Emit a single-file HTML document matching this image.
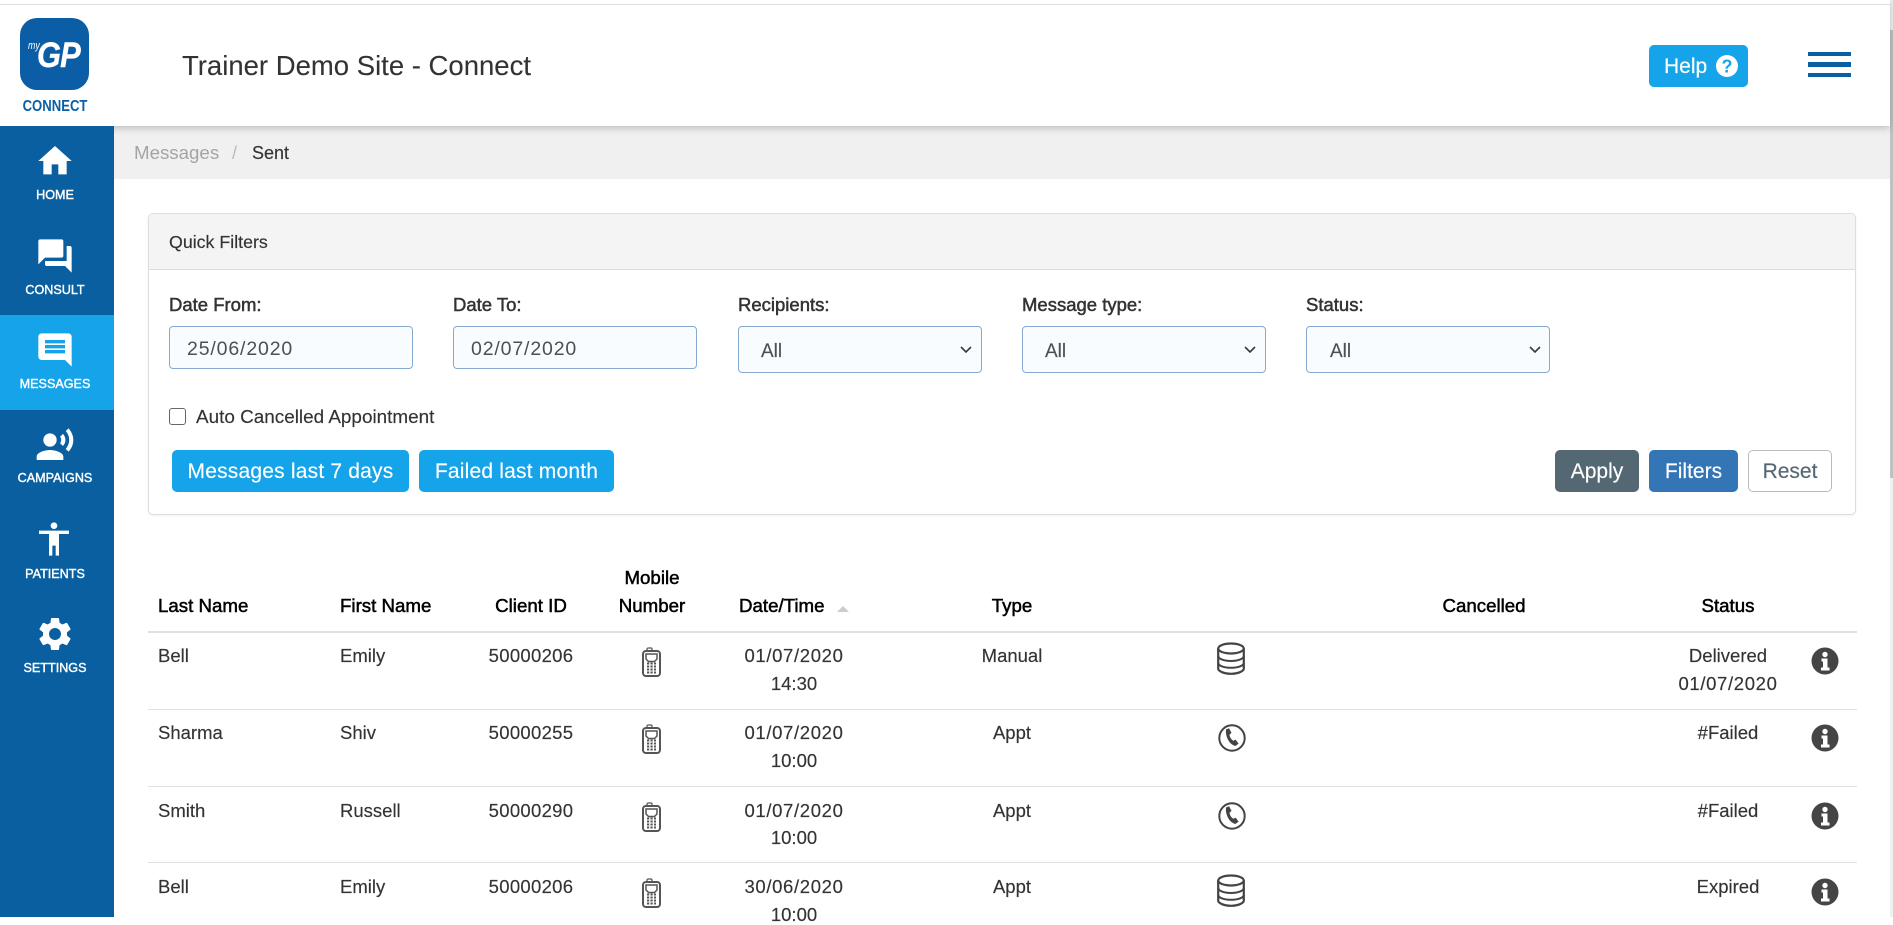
<!DOCTYPE html>
<html lang="en">
<head>
<meta charset="utf-8">
<title>Trainer Demo Site - Connect</title>
<style>
html,body{margin:0;padding:0;width:1893px;height:917px;overflow:hidden;background:#fff;font-family:"Liberation Sans",sans-serif;color:#333}
.a{position:absolute}
.t{position:absolute;white-space:nowrap;line-height:0;height:0;margin-top:1px}
.c{transform:translateX(-50%)}
.s{font-size:18.5px;color:#333;-webkit-text-stroke:.15px #333}
.n{letter-spacing:.3px}
.d{letter-spacing:.65px}
.h{font-size:18.7px;color:#000;-webkit-text-stroke:.5px #000}
.l{font-size:18.5px;color:#333;-webkit-text-stroke:.5px #333;top:304px}
.nav{font-size:12.6px;color:#fff;left:55px;-webkit-text-stroke:.4px #fff}
.ic{position:absolute;left:35px;width:40px;height:40px;fill:#fff}
.inp{position:absolute;box-sizing:border-box;background:#f9fcff;border:1px solid #86a9d2;border-radius:4px}
.btn{position:absolute;box-sizing:border-box;top:450px;height:42px;padding-top:2px;border-radius:5px;color:#fff;font-size:21px;display:flex;align-items:center;justify-content:center;white-space:nowrap;-webkit-text-stroke:.15px currentColor}
.line{position:absolute;left:148px;width:1709px;height:1px;background:#dee2e6}
.all{font-size:19px;color:#495057;top:351px;-webkit-text-stroke:.15px #495057}
.dv{font-size:19.5px;color:#495057;top:348px;letter-spacing:.85px}
.chev{position:absolute;top:346px;width:12px;height:8px;fill:none;stroke:#343a40;stroke-width:1.6}
</style>
</head>
<body>
<!-- scrollbar -->
<div class="a" style="left:1890px;top:0;width:3px;height:917px;background:#f0f0f0"></div>
<div class="a" style="left:1890px;top:30px;width:3px;height:448px;background:#c1c1c1"></div>

<!-- breadcrumb -->
<div class="a" style="left:114px;top:126px;width:1776px;height:53px;background:#f0f0f0"></div>
<span class="t" style="left:134px;top:152px;font-size:18.700px;color:#a4a4a4">Messages</span>
<span class="t" style="left:232px;top:152px;font-size:18px;color:#bbb">/</span>
<span class="t" style="left:252px;top:152px;font-size:18px;color:#333;-webkit-text-stroke:.15px #333">Sent</span>

<!-- header -->
<div class="a" style="left:0;top:0;width:1890px;height:126px;background:#fff;box-shadow:0 2px 7px rgba(0,0,0,.22)"></div>
<div class="a" style="left:0;top:4px;width:1893px;height:1px;background:#ddd"></div>
<div class="a" style="left:20px;top:18px;width:69px;height:72px;border-radius:17px;background:#0b5ea5"></div>
<span class="t" style="left:28px;top:45px;font-size:11px;font-style:italic;color:#fff;transform:scaleX(.8);transform-origin:left">my</span>
<span class="t" style="left:37px;top:55px;font-size:35px;font-weight:bold;font-style:italic;color:#fff;letter-spacing:-1px;-webkit-text-stroke:.4px #fff;transform:scaleX(.88);transform-origin:left">GP</span>
<span class="t" style="left:55px;top:106px;font-size:16px;font-weight:bold;color:#0b5ea5;transform:translateX(-50%) scaleX(.82)">CONNECT</span>
<span class="t" style="left:182px;top:65px;font-size:27.500px;color:#333;-webkit-text-stroke:.1px #333">Trainer Demo Site - Connect</span>
<div class="btn" style="left:1649px;top:45px;width:99px;background:#15a3e9;justify-content:flex-start;padding-left:15px">Help</div>
<svg class="a" style="left:1716px;top:55px" width="22" height="22" viewBox="0 0 22 22"><circle cx="11" cy="11" r="11" fill="#fff"/><text x="11" y="17.500" font-size="18" font-weight="bold" text-anchor="middle" fill="#15a3e9" font-family="Liberation Sans, sans-serif">?</text></svg>
<div class="a" style="left:1808px;top:52px;width:43px;height:4px;background:#0a5fa3"></div>
<div class="a" style="left:1808px;top:62px;width:43px;height:5px;background:#0a5fa3"></div>
<div class="a" style="left:1808px;top:73px;width:43px;height:4px;background:#0a5fa3"></div>

<!-- sidebar -->
<div class="a" style="left:0;top:126px;width:114px;height:791px;background:#0a5fa0"></div>
<div class="a" style="left:0;top:315px;width:114px;height:95px;background:#15a3e9"></div>
<svg class="ic" style="top:141px" viewBox="0 0 24 24"><path d="M10 20v-6h4v6h5v-8h3L12 3 2 12h3v8z"/></svg>
<span class="t nav c" style="top:194px">HOME</span>
<svg class="ic" style="top:236px" viewBox="0 0 24 24"><path d="M21 6h-2v9H6v2c0 .55.45 1 1 1h11l4 4V7c0-.55-.45-1-1-1zm-4 6V3c0-.55-.45-1-1-1H3c-.55 0-1 .45-1 1v14l4-4h10c.55 0 1-.45 1-1z"/></svg>
<span class="t nav c" style="top:289px">CONSULT</span>
<svg class="ic" style="top:330px;transform:scaleX(-1)" viewBox="0 0 24 24"><path d="M20 2H4c-1.1 0-1.99.9-1.99 2L2 22l4-4h14c1.1 0 2-.9 2-2V4c0-1.1-.9-2-2-2zm-2 12H6v-2h12v2zm0-3H6V9h12v2zm0-3H6V6h12v2z"/></svg>
<span class="t nav c" style="top:383px">MESSAGES</span>
<svg class="ic" style="top:425px" viewBox="0 0 24 24"><circle cx="9" cy="9" r="4"/><path d="M9 15c-2.67 0-8 1.34-8 4v2h16v-2c0-2.66-5.33-4-8-4zm7.76-9.64l-1.68 1.69c.84 1.18.84 2.71 0 3.89l1.68 1.69c2.02-2.02 2.02-5.07 0-7.27zM20.07 2l-1.63 1.63c2.77 3.02 2.77 7.56 0 10.74L20.07 16c3.9-3.89 3.91-9.95 0-14z"/></svg>
<span class="t nav c" style="top:477px">CAMPAIGNS</span>
<svg class="ic" style="top:519px;left:34px" viewBox="0 0 24 24"><path d="M12 2c1.1 0 2 .9 2 2s-.9 2-2 2-2-.9-2-2 .9-2 2-2zm9 7h-6v13h-2v-6h-2v6H9V9H3V7h18v2z"/></svg>
<span class="t nav c" style="top:573px">PATIENTS</span>
<svg class="ic" style="top:614px" viewBox="0 0 24 24"><path d="M19.14 12.94c.04-.3.06-.61.06-.94 0-.32-.02-.64-.07-.94l2.03-1.58c.18-.14.23-.41.12-.61l-1.92-3.32c-.12-.22-.37-.29-.59-.22l-2.39.96c-.5-.38-1.03-.7-1.62-.94l-.36-2.54c-.04-.24-.24-.41-.48-.41h-3.84c-.24 0-.43.17-.47.41l-.36 2.54c-.59.24-1.13.57-1.62.94l-2.39-.96c-.22-.08-.47 0-.59.22L2.74 8.87c-.12.21-.08.47.12.61l2.03 1.58c-.05.3-.09.63-.09.94s.02.64.07.94l-2.03 1.58c-.18.14-.23.41-.12.61l1.92 3.32c.12.22.37.29.59.22l2.39-.96c.5.38 1.03.7 1.62.94l.36 2.54c.05.24.24.41.48.41h3.84c.24 0 .44-.17.47-.41l.36-2.54c.59-.24 1.13-.56 1.62-.94l2.39.96c.22.08.47 0 .59-.22l1.92-3.32c.12-.22.07-.47-.12-.61l-2.01-1.58zM12 15.6c-1.98 0-3.6-1.62-3.6-3.6s1.62-3.6 3.6-3.6 3.6 1.62 3.6 3.6-1.62 3.6-3.6 3.6z"/></svg>
<span class="t nav c" style="top:667px">SETTINGS</span>

<!-- quick filters panel -->
<div class="a" style="left:148px;top:213px;width:1706px;height:300px;border:1px solid #ddd;border-radius:5px;box-shadow:0 1px 2px rgba(0,0,0,.06)"></div>
<div class="a" style="left:149px;top:214px;width:1706px;height:55px;background:#f4f4f4;border-bottom:1px solid #ddd;border-radius:4px 4px 0 0"></div>
<span class="t" style="left:169px;top:241px;font-size:17.800px;color:#333;-webkit-text-stroke:.15px #333">Quick Filters</span>

<span class="t l" style="left:169px">Date From:</span>
<span class="t l" style="left:453px">Date To:</span>
<span class="t l" style="left:738px">Recipients:</span>
<span class="t l" style="left:1022px">Message type:</span>
<span class="t l" style="left:1306px">Status:</span>

<div class="inp" style="left:169px;top:326px;width:244px;height:43px"></div>
<span class="t dv" style="left:187px">25/06/2020</span>
<div class="inp" style="left:453px;top:326px;width:244px;height:43px"></div>
<span class="t dv" style="left:471px">02/07/2020</span>

<div class="inp" style="left:738px;top:326px;width:244px;height:47px"></div>
<span class="t all" style="left:761px">All</span>
<svg class="chev" style="left:960px" viewBox="0 0 12 8"><path d="M1 1l5 5 5-5"/></svg>
<div class="inp" style="left:1022px;top:326px;width:244px;height:47px"></div>
<span class="t all" style="left:1045px">All</span>
<svg class="chev" style="left:1244px" viewBox="0 0 12 8"><path d="M1 1l5 5 5-5"/></svg>
<div class="inp" style="left:1306px;top:326px;width:244px;height:47px"></div>
<span class="t all" style="left:1330px">All</span>
<svg class="chev" style="left:1529px" viewBox="0 0 12 8"><path d="M1 1l5 5 5-5"/></svg>

<div class="a" style="left:169px;top:408px;width:17px;height:17px;box-sizing:border-box;border:1px solid #666;border-radius:3px;background:#fff"></div>
<span class="t" style="left:196px;top:417px;font-size:18.900px;color:#333;-webkit-text-stroke:.15px #333">Auto Cancelled Appointment</span>

<div class="btn" style="left:172px;width:237px;background:#15a3e9;letter-spacing:.2px">Messages last 7 days</div>
<div class="btn" style="left:419px;width:195px;background:#15a3e9;letter-spacing:.2px">Failed last month</div>
<div class="btn" style="left:1555px;width:84px;background:#546873">Apply</div>
<div class="btn" style="left:1649px;width:89px;background:#3375b5">Filters</div>
<div class="btn" style="left:1748px;width:84px;background:#fff;border:1px solid #bbb;color:#546873">Reset</div>

<!-- table header -->
<span class="t h" style="left:158px;top:605px">Last Name</span>
<span class="t h" style="left:340px;top:605px">First Name</span>
<span class="t h c" style="left:531px;top:605px">Client ID</span>
<span class="t h c" style="left:652px;top:577px">Mobile</span>
<span class="t h c" style="left:652px;top:605px">Number</span>
<span class="t h" style="left:739px;top:605px">Date/Time</span>
<svg class="a" style="left:837px;top:606px" width="12" height="6" viewBox="0 0 12 6"><path d="M6 0l6 6H0z" fill="#ccc"/></svg>
<span class="t h c" style="left:1012px;top:605px">Type</span>
<span class="t h c" style="left:1484px;top:605px">Cancelled</span>
<span class="t h c" style="left:1728px;top:605px">Status</span>

<div class="line" style="top:631px;height:2px"></div>
<div class="line" style="top:709px"></div>
<div class="line" style="top:786px"></div>
<div class="line" style="top:862px"></div>

<svg width="0" height="0" style="position:absolute">
  <defs>
    <g id="mob">
      <path d="M5 4V2.200C5 1.300 5.700 1 6.500 1H9c.8 0 1 .6 1 1.400V4" fill="none" stroke="#555" stroke-width="1.300"/>
      <rect x="1" y="4" width="17" height="25" rx="3" fill="#fff" stroke="#555" stroke-width="2"/>
      <path d="M4 7h11v5l-2.500 2.500h-6L4 12z" fill="#fff" stroke="#555" stroke-width="1.500"/>
      <path d="M5 16.500h9M5 19.500h9M5 22.500h9M5 25.500h9" stroke="#555" stroke-width="2" stroke-dasharray="2.200 1.300" fill="none"/>
    </g>
    <g id="db" fill="none" stroke="#444" stroke-width="2.200">
      <ellipse cx="14" cy="6.500" rx="12.800" ry="5"/>
      <path d="M1.200 6.500v20c0 2.800 6 5.300 12.800 5.300s12.800-2.500 12.800-5.300v-20"/>
      <path d="M1.200 14c0 2.800 6 5 12.800 5s12.800-2.200 12.800-5M1.200 21c0 2.800 6 4.800 12.800 4.800s12.800-2 12.800-4.800" stroke-width="2"/>
    </g>
    <g id="ph">
      <circle cx="14" cy="14" r="12.700" fill="#fff" stroke="#444" stroke-width="2"/>
      <path fill="#444" d="M8 5.500l3-1.200 2.500 4.500-2 2c.3 2.500 1.800 4.800 3.800 6l2.300-1.200 3 4-3 2.300c-5-.5-10.500-8-9.600-16.400z"/>
    </g>
    <g id="inf">
      <circle cx="14" cy="14" r="13.500" fill="#454545"/>
      <circle cx="14" cy="7.500" r="2.700" fill="#fff"/>
      <path d="M10.500 11.500h6v9H18.500v3h-8.500v-3h2v-6h-1.500z" fill="#fff"/>
    </g>
  </defs>
</svg>

<!-- row 1 -->
<span class="t s" style="left:158px;top:655px">Bell</span>
<span class="t s" style="left:340px;top:655px">Emily</span>
<span class="t s n c" style="left:531px;top:655px">50000206</span>
<svg class="a" style="left:642px;top:647px" width="19" height="30" viewBox="0 0 19 30"><use href="#mob"/></svg>
<span class="t s d c" style="left:794px;top:655px">01/07/2020</span>
<span class="t s c" style="left:794px;top:683px">14:30</span>
<span class="t s c" style="left:1012px;top:655px">Manual</span>
<svg class="a" style="left:1217px;top:642px" width="28" height="33" viewBox="0 0 28 33"><use href="#db"/></svg>
<span class="t s c" style="left:1728px;top:655px">Delivered</span>
<span class="t s d c" style="left:1728px;top:683px">01/07/2020</span>
<svg class="a" style="left:1811px;top:647px" width="28" height="28" viewBox="0 0 28 28"><use href="#inf"/></svg>

<!-- row 2 -->
<span class="t s" style="left:158px;top:732px">Sharma</span>
<span class="t s" style="left:340px;top:732px">Shiv</span>
<span class="t s n c" style="left:531px;top:732px">50000255</span>
<svg class="a" style="left:642px;top:724px" width="19" height="30" viewBox="0 0 19 30"><use href="#mob"/></svg>
<span class="t s d c" style="left:794px;top:732px">01/07/2020</span>
<span class="t s c" style="left:794px;top:760px">10:00</span>
<span class="t s c" style="left:1012px;top:732px">Appt</span>
<svg class="a" style="left:1218px;top:724px" width="28" height="28" viewBox="0 0 28 28"><use href="#ph"/></svg>
<span class="t s c" style="left:1728px;top:732px">#Failed</span>
<svg class="a" style="left:1811px;top:724px" width="28" height="28" viewBox="0 0 28 28"><use href="#inf"/></svg>

<!-- row 3 -->
<span class="t s" style="left:158px;top:810px">Smith</span>
<span class="t s" style="left:340px;top:810px">Russell</span>
<span class="t s n c" style="left:531px;top:810px">50000290</span>
<svg class="a" style="left:642px;top:802px" width="19" height="30" viewBox="0 0 19 30"><use href="#mob"/></svg>
<span class="t s d c" style="left:794px;top:810px">01/07/2020</span>
<span class="t s c" style="left:794px;top:837px">10:00</span>
<span class="t s c" style="left:1012px;top:810px">Appt</span>
<svg class="a" style="left:1218px;top:802px" width="28" height="28" viewBox="0 0 28 28"><use href="#ph"/></svg>
<span class="t s c" style="left:1728px;top:810px">#Failed</span>
<svg class="a" style="left:1811px;top:802px" width="28" height="28" viewBox="0 0 28 28"><use href="#inf"/></svg>

<!-- row 4 -->
<span class="t s" style="left:158px;top:886px">Bell</span>
<span class="t s" style="left:340px;top:886px">Emily</span>
<span class="t s n c" style="left:531px;top:886px">50000206</span>
<svg class="a" style="left:642px;top:878px" width="19" height="30" viewBox="0 0 19 30"><use href="#mob"/></svg>
<span class="t s d c" style="left:794px;top:886px">30/06/2020</span>
<span class="t s c" style="left:794px;top:914px">10:00</span>
<span class="t s c" style="left:1012px;top:886px">Appt</span>
<svg class="a" style="left:1217px;top:874px" width="28" height="33" viewBox="0 0 28 33"><use href="#db"/></svg>
<span class="t s c" style="left:1728px;top:886px">Expired</span>
<svg class="a" style="left:1811px;top:878px" width="28" height="28" viewBox="0 0 28 28"><use href="#inf"/></svg>
</body>
</html>
